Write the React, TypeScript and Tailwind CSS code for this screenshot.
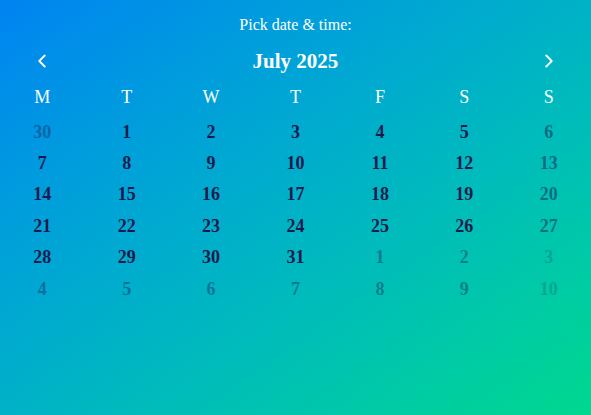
import React from "react";
import { ChevronLeft, ChevronRight } from "lucide-react";

type Day = { n: number; other: boolean };

function buildDays(): Day[] {
  const days: Day[] = [{ n: 30, other: true }];
  for (let i = 1; i <= 31; i++) days.push({ n: i, other: false });
  for (let i = 1; i <= 10; i++) days.push({ n: i, other: true });
  return days;
}

export default function App() {
  const days = buildDays();
  const weekdays = ["M", "T", "W", "T", "F", "S", "S"];
  return (
    <div className="w-full h-[415px] bg-linear-to-br from-[#0083f2] to-[#00d88e] font-['Liberation_Serif',serif] text-white overflow-hidden">
      <div className="pt-[16px] text-center text-[16px] leading-[18px]">Pick date &amp; time:</div>
      <div className="mt-[12px] grid grid-cols-7 h-[30px] items-center">
        <div className="flex justify-center">
          <ChevronLeft size={22} strokeWidth={2} />
        </div>
        <div className="col-span-5 text-center font-bold text-[21px] leading-[30px]">July 2025</div>
        <div className="flex justify-center">
          <ChevronRight size={22} strokeWidth={2} />
        </div>
      </div>
      <div className="mt-[6px] grid grid-cols-7 h-[30px] items-center">
        {weekdays.map((w, i) => (
          <div key={i} className="text-center text-[18px] leading-[30px]">
            {w}
          </div>
        ))}
      </div>
      <div className="mt-[4.5px] grid grid-cols-7">
        {days.map((d, i) => {
          const sunday = i % 7 === 6;
          let op = "opacity-100";
          if (d.other && sunday) op = "opacity-20";
          else if (d.other) op = "opacity-40";
          else if (sunday) op = "opacity-50";
          return (
            <div
              key={i}
              className={`h-[31.4px] flex items-center justify-center text-[18px] font-bold text-[#1a1b4d] ${op}`}
            >
              {d.n}
            </div>
          );
        })}
      </div>
    </div>
  );
}
